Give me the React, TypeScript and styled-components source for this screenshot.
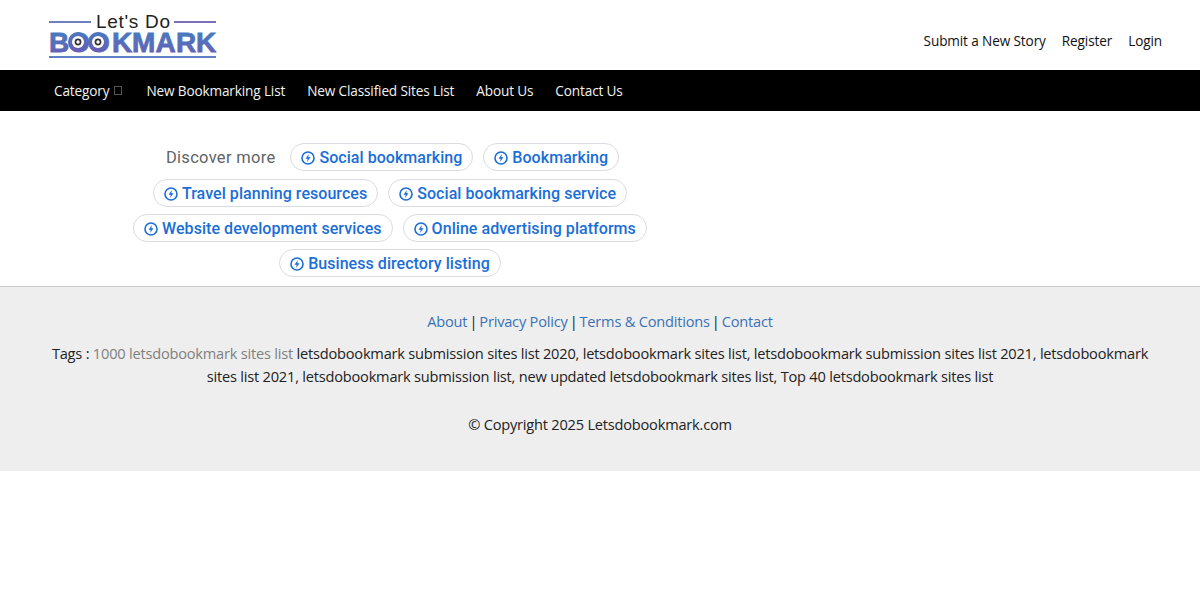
import React from "react";
import styled, { createGlobalStyle } from "styled-components";

const GlobalStyle = createGlobalStyle`
  * {
    box-sizing: border-box;
  }

  body {
    margin: 0;
    background: #fff;
    font-family: "Open Sans", "Noto Sans", sans-serif;
    color: #212529;
  }
`;

const Header = styled.header`
  height: 70px;
  display: flex;
  justify-content: space-between;
  padding: 12px 38px 0 48px;
`;

const UserLinks = styled.nav`
  display: flex;
  gap: 16px;
  padding-top: 21px;
`;

const UserLink = styled.a`
  font-size: 13.6px;
  line-height: 16px;
  letter-spacing: -0.12px;
  color: #111;
`;

const NavBar = styled.nav`
  height: 41px;
  background: #000;
  display: flex;
  align-items: center;
  gap: 22px;
  padding-left: 54px;
`;

const NavLink = styled.a`
  font-size: 13.6px;
  letter-spacing: -0.14px;
  color: #f2f2f2;
  display: flex;
  align-items: center;
`;

const MissingGlyph = styled.span`
  width: 8px;
  height: 9px;
  margin: 0 2px 0 5px;
  border: 1px solid #555;
`;

const Main = styled.main`
  height: 175px;
  padding-top: 32px;
`;

const ChipBlock = styled.div`
  width: 780px;
  display: flex;
  flex-direction: column;
  gap: 7px;
`;

const ChipRow = styled.div<{ $first?: boolean }>`
  display: flex;
  justify-content: center;
  gap: 10px;
  margin-bottom: ${(p) => (p.$first ? "1px" : "0")};
`;

const DiscoverLabel = styled.span`
  height: 28px;
  padding-top: 1px;
  font-family: Roboto, sans-serif;
  font-size: 16.5px;
  line-height: 28px;
  letter-spacing: 0.3px;
  color: #5f6368;
  margin: 0 5px;
`;

const Chip = styled.a`
  height: 28px;
  display: flex;
  align-items: center;
  gap: 3px;
  padding: 0 10px;
  border: 1px solid #d9dce0;
  border-radius: 14px;
  background: #fff;
  font-family: Roboto, sans-serif;
  font-size: 16px;
  font-weight: 500;
  letter-spacing: 0.05px;
  color: #1a6ed8;
`;

const Footer = styled.footer`
  height: 185px;
  background: #eee;
  border-top: 1px solid #ccc;
  padding: 23px 48px 0;
  text-align: center;
  font-size: 14.6px;
  letter-spacing: -0.21px;
  line-height: 23px;
  color: #222;
`;

const FooterLinks = styled.p`
  margin: 0 0 9px;
`;

const FooterLink = styled.a`
  color: #3a72b8;
`;

const Separator = styled.span`
  margin: 0 -1.5px;
`;

const TagsText = styled.p`
  margin: 0 0 25px;
`;

const MutedTag = styled.span`
  color: #808080;
`;

const Copyright = styled.p`
  margin: 0;
`;

const BoltIcon = () => (
  <svg width="15" height="15" viewBox="0 0 15 15" fill="none">
    <circle cx="7" cy="8" r="6" stroke="#1a6ed8" strokeWidth="1.6" />
    <path d="M7.9 4 4.5 8.7h2.2L6.1 12l3.4-4.7H7.3z" fill="#1a6ed8" />
  </svg>
);

const Eye = ({ cx }: { cx: number }) => (
  <g>
    <circle cx={cx} cy={30} r={10} fill="url(#logoEye)" />
    <circle cx={cx} cy={30} r={6} fill="#fff" />
    <circle cx={cx} cy={30} r={3.4} fill="#333" />
    <circle cx={cx} cy={30} r={1.7} fill="#fff" />
  </g>
);

const Logo = () => (
  <svg width="170" height="50" viewBox="0 0 170 50">
    <defs>
      <linearGradient id="logoText" x1="0" y1="0" x2="0" y2="1">
        <stop offset="0" stopColor="#3f80c0" />
        <stop offset="1" stopColor="#6a5cb4" />
      </linearGradient>
      <linearGradient id="logoEye" x1="0" y1="0" x2="0" y2="1">
        <stop offset="0" stopColor="#4a78bf" />
        <stop offset="1" stopColor="#6a5cb4" />
      </linearGradient>
    </defs>
    <rect x="1" y="9" width="42" height="2" fill="#6f7ec0" />
    <rect x="126" y="9" width="42" height="2" fill="#7a6fbd" />
    <text x="48" y="16" fontFamily="Liberation Sans, sans-serif" fontSize="19" fill="#222" letterSpacing="0.7">
      Let's Do
    </text>
    <text
      x="1 20 40 64 84 107.5 128 148"
      y="40"
      fontFamily="Liberation Sans, sans-serif"
      fontSize="28"
      fontWeight="700"
      fill="url(#logoText)"
      stroke="url(#logoText)"
      strokeWidth="0.8"
    >
      BOOKMARK
    </text>
    <Eye cx={30} />
    <Eye cx={50} />
    <rect x="1" y="44" width="167" height="2" fill="#5f80c4" />
  </svg>
);

const chipRows = [
  ["Social bookmarking", "Bookmarking"],
  ["Travel planning resources", "Social bookmarking service"],
  ["Website development services", "Online advertising platforms"],
  ["Business directory listing"],
];

const App = () => (
  <>
    <GlobalStyle />
    <Header>
      <Logo />
      <UserLinks>
        <UserLink>Submit a New Story</UserLink>
        <UserLink>Register</UserLink>
        <UserLink>Login</UserLink>
      </UserLinks>
    </Header>
    <NavBar>
      <NavLink>
        Category
        <MissingGlyph />
      </NavLink>
      <NavLink>New Bookmarking List</NavLink>
      <NavLink>New Classified Sites List</NavLink>
      <NavLink>About Us</NavLink>
      <NavLink>Contact Us</NavLink>
    </NavBar>
    <Main>
      <ChipBlock>
        {chipRows.map((row, index) => (
          <ChipRow key={row[0]} $first={index === 0}>
            {index === 0 && <DiscoverLabel>Discover more</DiscoverLabel>}
            {row.map((label) => (
              <Chip key={label}>
                <BoltIcon />
                {label}
              </Chip>
            ))}
          </ChipRow>
        ))}
      </ChipBlock>
    </Main>
    <Footer>
      <FooterLinks>
        <FooterLink>About</FooterLink> <Separator>|</Separator> <FooterLink>Privacy Policy</FooterLink>{" "}
        <Separator>|</Separator> <FooterLink>Terms &amp; Conditions</FooterLink> <Separator>|</Separator>{" "}
        <FooterLink>Contact</FooterLink>
      </FooterLinks>
      <TagsText>
        Tags : <MutedTag>1000 letsdobookmark sites list</MutedTag> letsdobookmark submission sites list 2020,
        letsdobookmark sites list, letsdobookmark submission sites list 2021, letsdobookmark sites list 2021,
        letsdobookmark submission list, new updated letsdobookmark sites list, Top 40 letsdobookmark sites list
      </TagsText>
      <Copyright>© Copyright 2025 Letsdobookmark.com</Copyright>
    </Footer>
  </>
);

export default App;
